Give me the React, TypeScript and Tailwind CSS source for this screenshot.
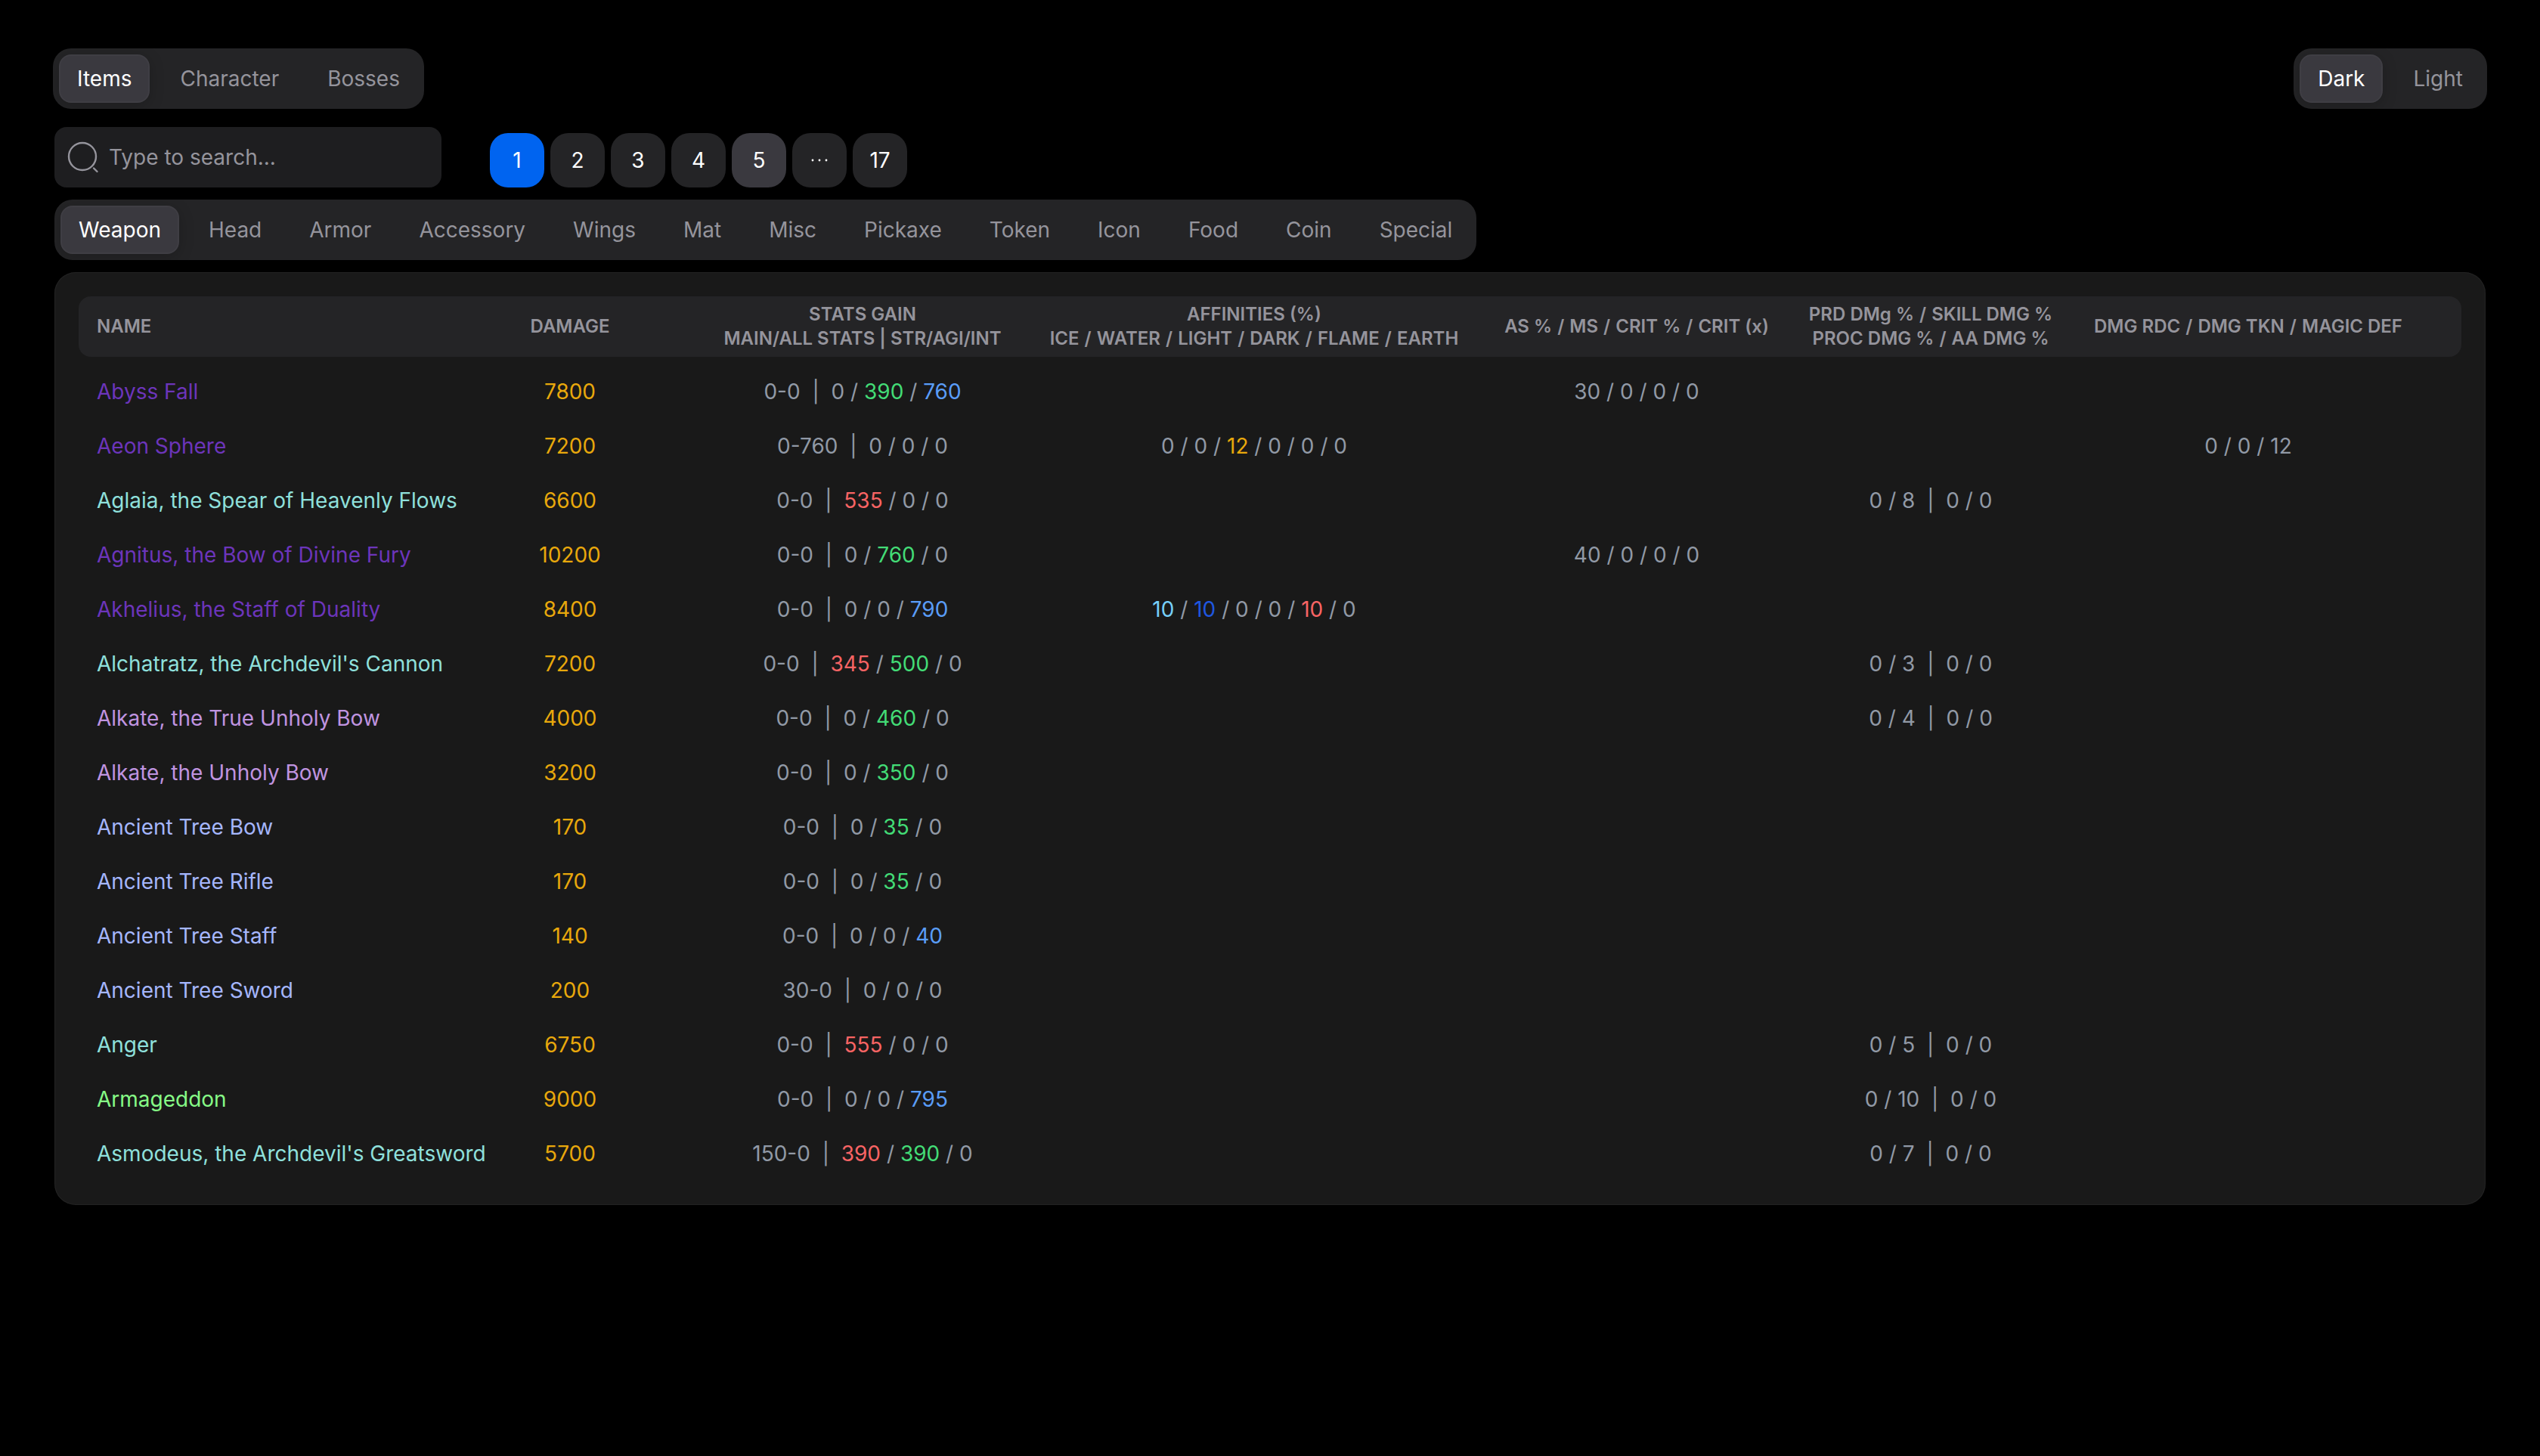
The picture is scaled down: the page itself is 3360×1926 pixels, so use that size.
import { Fragment, useState } from "react";

const rarity = {
  violet: "text-[#6c35bb]",
  teal: "text-[#8fe0dc]",
  orchid: "text-[#c094e0]",
  periwinkle: "text-[#a5b6fd]",
  lime: "text-[#86fb86]",
};

const tint = {
  str: "text-[#f86464]",
  agi: "text-[#43dc76]",
  int: "text-[#5a9df8]",
  gold: "text-[#e8a80c]",
  ice: "text-[#76cffa]",
  water: "text-[#1f57e0]",
};

type Tint = keyof typeof tint;
type Part = number | [number, Tint];

interface Item {
  name: string;
  rarity: keyof typeof rarity;
  damage: number;
  main: string;
  stats: Part[];
  affinities?: Part[];
  speed?: Part[];
  skill?: [Part[], Part[]];
  defence?: Part[];
}

const items: Item[] = [
  { name: "Abyss Fall", rarity: "violet", damage: 7800, main: "0-0", stats: [0, [390, "agi"], [760, "int"]], speed: [30, 0, 0, 0] },
  { name: "Aeon Sphere", rarity: "violet", damage: 7200, main: "0-760", stats: [0, 0, 0], affinities: [0, 0, [12, "gold"], 0, 0, 0], defence: [0, 0, 12] },
  { name: "Aglaia, the Spear of Heavenly Flows", rarity: "teal", damage: 6600, main: "0-0", stats: [[535, "str"], 0, 0], skill: [[0, 8], [0, 0]] },
  { name: "Agnitus, the Bow of Divine Fury", rarity: "violet", damage: 10200, main: "0-0", stats: [0, [760, "agi"], 0], speed: [40, 0, 0, 0] },
  { name: "Akhelius, the Staff of Duality", rarity: "violet", damage: 8400, main: "0-0", stats: [0, 0, [790, "int"]], affinities: [[10, "ice"], [10, "water"], 0, 0, [10, "str"], 0] },
  { name: "Alchatratz, the Archdevil's Cannon", rarity: "teal", damage: 7200, main: "0-0", stats: [[345, "str"], [500, "agi"], 0], skill: [[0, 3], [0, 0]] },
  { name: "Alkate, the True Unholy Bow", rarity: "orchid", damage: 4000, main: "0-0", stats: [0, [460, "agi"], 0], skill: [[0, 4], [0, 0]] },
  { name: "Alkate, the Unholy Bow", rarity: "orchid", damage: 3200, main: "0-0", stats: [0, [350, "agi"], 0] },
  { name: "Ancient Tree Bow", rarity: "periwinkle", damage: 170, main: "0-0", stats: [0, [35, "agi"], 0] },
  { name: "Ancient Tree Rifle", rarity: "periwinkle", damage: 170, main: "0-0", stats: [0, [35, "agi"], 0] },
  { name: "Ancient Tree Staff", rarity: "periwinkle", damage: 140, main: "0-0", stats: [0, 0, [40, "int"]] },
  { name: "Ancient Tree Sword", rarity: "periwinkle", damage: 200, main: "30-0", stats: [0, 0, 0] },
  { name: "Anger", rarity: "teal", damage: 6750, main: "0-0", stats: [[555, "str"], 0, 0], skill: [[0, 5], [0, 0]] },
  { name: "Armageddon", rarity: "lime", damage: 9000, main: "0-0", stats: [0, 0, [795, "int"]], skill: [[0, 10], [0, 0]] },
  { name: "Asmodeus, the Archdevil's Greatsword", rarity: "teal", damage: 5700, main: "150-0", stats: [[390, "str"], [390, "agi"], 0], skill: [[0, 7], [0, 0]] },
];

const sections = ["Items", "Character", "Bosses"];
const themes = ["Dark", "Light"];
const categories = ["Weapon", "Head", "Armor", "Accessory", "Wings", "Mat", "Misc", "Pickaxe", "Token", "Icon", "Food", "Coin", "Special"];
const pages = ["1", "2", "3", "4", "5", "···", "17"];

const columns: string[][] = [
  ["DAMAGE"],
  ["STATS GAIN", "MAIN/ALL STATS | STR/AGI/INT"],
  ["AFFINITIES (%)", "ICE / WATER / LIGHT / DARK / FLAME / EARTH"],
  ["AS % / MS / CRIT % / CRIT (x)"],
  ["PRD DMg % / SKILL DMG %", "PROC DMG % / AA DMG %"],
  ["DMG RDC / DMG TKN / MAGIC DEF"],
];

function Tabs({ label, options, gap = "gap-4" }: { label: string; options: string[]; gap?: string }) {
  const [active, setActive] = useState(options[0]);
  return (
    <div role="tablist" aria-label={label} className={`flex w-fit rounded-3xl bg-[#242426] p-2 ${gap}`}>
      {options.map((option) => (
        <button
          key={option}
          type="button"
          role="tab"
          aria-selected={option === active}
          onClick={() => setActive(option)}
          className={
            option === active
              ? "h-16 rounded-2xl border-2 border-[#3f3e44] bg-[#3a393f] px-[22px] text-white shadow-[0_4px_20px_rgba(0,0,0,0.2)]"
              : "h-16 rounded-2xl px-6 text-[#95949c]"
          }
        >
          {option}
        </button>
      ))}
    </div>
  );
}

function Pagination() {
  const [page, setPage] = useState("1");
  return (
    <nav aria-label="Pages" className="flex gap-2">
      {pages.map((p) => (
        <button
          key={p}
          type="button"
          onClick={() => setPage(p)}
          className={
            p === page
              ? "size-[72px] rounded-3xl bg-[#0064f0] text-white"
              : p === "5"
                ? "size-[72px] rounded-3xl bg-[#3a393f] text-white"
                : "size-[72px] rounded-3xl bg-[#242426] text-white"
          }
        >
          {p === "···" ? (
            <svg viewBox="0 0 24 24" className="mx-auto size-6" fill="currentColor" aria-label="More pages">
              <circle cx="3" cy="12" r="1.4" />
              <circle cx="12" cy="12" r="1.4" />
              <circle cx="21" cy="12" r="1.4" />
            </svg>
          ) : (
            p
          )}
        </button>
      ))}
    </nav>
  );
}

function HeaderLine({ text }: { text: string }) {
  return (
    <div>
      {text.split(" / ").map((word, i) => (
        <Fragment key={i}>
          {i > 0 && <span className="px-px">{" / "}</span>}
          {word}
        </Fragment>
      ))}
    </div>
  );
}

function Parts({ parts }: { parts: Part[] }) {
  return (
    <>
      {parts.map((part, i) => (
        <Fragment key={i}>
          {i > 0 && " / "}
          {typeof part === "number" ? part : <span className={tint[part[1]]}>{part[0]}</span>}
        </Fragment>
      ))}
    </>
  );
}

function Divider() {
  return <>{" \u00a0|\u00a0 "}</>;
}

export default function App() {
  return (
    <main className="min-h-screen bg-black px-[72px] pt-16 pb-16 font-['Inter',sans-serif] text-[28px] leading-10">
      <header className="-mx-[2px] flex items-center justify-between">
        <Tabs label="Section" options={sections} />
        <Tabs label="Theme" options={themes} />
      </header>

      <div className="mt-6 flex items-end gap-16">
        <label className="flex h-20 w-[512px] items-center gap-3 rounded-2xl bg-[#1e1e20] px-4 text-[#95949c]">
          <svg viewBox="0 0 44 44" className="size-11 shrink-0" fill="none" stroke="currentColor" strokeWidth="2.4" strokeLinecap="round">
            <circle cx="21" cy="21" r="18" />
            <path d="M36 36.500l4.500 4.500" />
          </svg>
          <input
            type="search"
            aria-label="Search items"
            placeholder="Type to search..."
            className="min-w-0 flex-1 bg-transparent text-white outline-none placeholder:text-[#95949c]"
          />
        </label>
        <Pagination />
      </div>

      <div className="mt-4">
        <Tabs label="Category" options={categories} gap="gap-[15px]" />
      </div>

      <section className="mt-4 rounded-[28px] bg-[#191919] p-8 shadow-[inset_0_0_2px_rgba(255,255,255,0.15)]">
        <table className="w-full table-fixed border-separate border-spacing-0 whitespace-nowrap text-center">
          <colgroup>
            <col className="w-[502px]" />
            <col className="w-[296px]" />
            <col className="w-[478px]" />
            <col className="w-[558px]" />
            <col className="w-[454px]" />
            <col className="w-[324px]" />
            <col />
          </colgroup>
          <thead className="text-2xl leading-8 text-[#95949c]">
            <tr>
              <th scope="col" className="h-20 rounded-l-2xl bg-[#242426] pl-6 text-left font-semibold">
                NAME
              </th>
              {columns.map((lines) => (
                <th key={lines[0]} scope="col" className="h-20 bg-[#242426] font-semibold last:rounded-r-2xl last:pr-6">
                  {lines.map((line) => (
                    <HeaderLine key={line} text={line} />
                  ))}
                </th>
              ))}
            </tr>
          </thead>
          <tbody className="text-[#9199a6] before:block before:h-[10px]">
            {items.map((item) => (
              <tr key={item.name} className="h-[72px]">
                <td className="pl-6 text-left">
                  <span className={rarity[item.rarity]}>{item.name}</span>
                </td>
                <td className="text-[#e8a80c]">{item.damage}</td>
                <td>
                  {item.main}
                  <Divider />
                  <Parts parts={item.stats} />
                </td>
                <td>{item.affinities && <Parts parts={item.affinities} />}</td>
                <td>{item.speed && <Parts parts={item.speed} />}</td>
                <td>
                  {item.skill && (
                    <>
                      <Parts parts={item.skill[0]} />
                      <Divider />
                      <Parts parts={item.skill[1]} />
                    </>
                  )}
                </td>
                <td className="pr-6">{item.defence && <Parts parts={item.defence} />}</td>
              </tr>
            ))}
          </tbody>
        </table>
      </section>
    </main>
  );
}
